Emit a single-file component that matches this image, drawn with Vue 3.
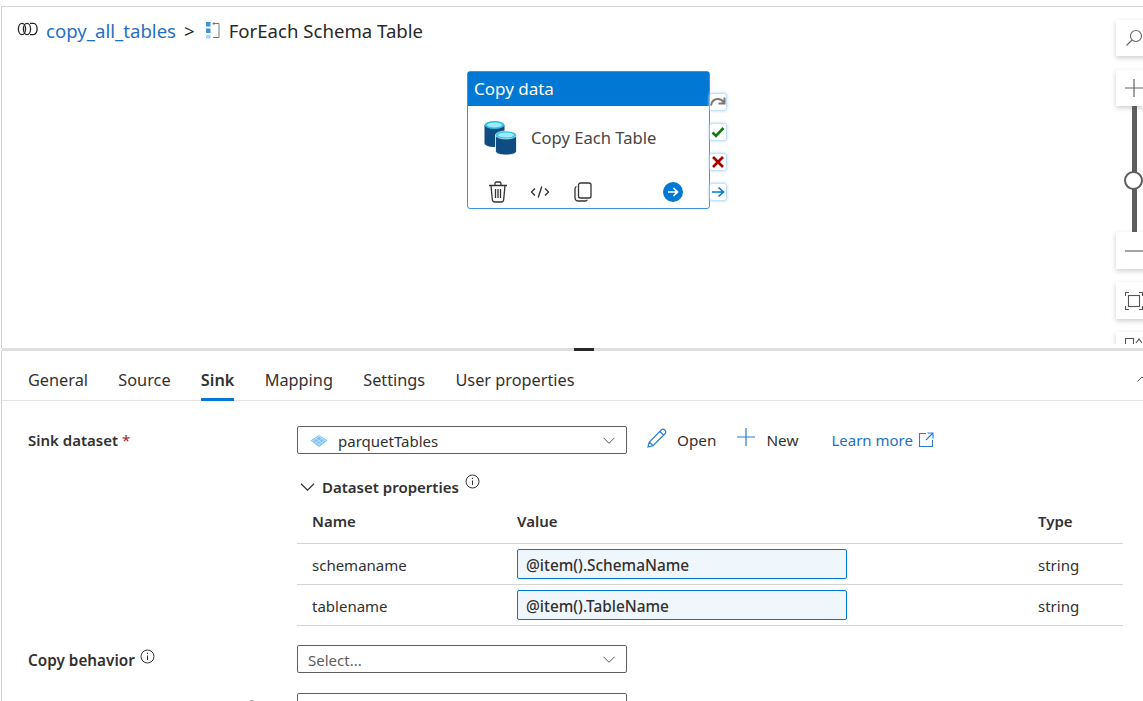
<script setup>
const tabs = ['General', 'Source', 'Sink', 'Mapping', 'Settings', 'User properties']
const params = [
  { name: 'schemaname', value: '@item().SchemaName' },
  { name: 'tablename', value: '@item().TableName' },
]
</script>

<template>
  <div class="page">
    <section class="canvas">
      <nav class="crumbs">
        <svg class="crumb-pipe" width="22" height="16" viewBox="0 0 22 16" fill="none" stroke="#222" stroke-width="1.3">
          <ellipse cx="5" cy="8" rx="3.6" ry="5.6" />
          <ellipse cx="10" cy="8" rx="3.6" ry="5.6" />
          <path d="M13 2.4h3.5a3.6 5.6 0 0 1 0 11.2H13" />
        </svg>
        <a class="crumb-link">copy_all_tables</a>
        <span class="crumb-sep">&gt;</span>
        <svg class="crumb-loop" width="16" height="18" viewBox="0 0 16 18" fill="none">
          <rect x="1" y="1" width="4.5" height="4.5" fill="#3a96dd" />
          <rect x="1" y="7.5" width="4.5" height="4.5" fill="#3a96dd" />
          <rect x="1" y="14" width="4.5" height="3.5" fill="#a9d3f2" />
          <path d="M8 2.5h6v14H8M9.5 1 8 2.5 9.5 4" stroke="#777" stroke-width="1" />
        </svg>
        <span class="crumb-current">ForEach Schema Table</span>
      </nav>

      <article class="node">
        <header class="node-head">Copy data</header>
        <div class="node-body">
          <svg width="34" height="36" viewBox="0 0 34 36">
            <path d="M.5 6v18c0 2.600 5 4 10 4s10-1.400 10-4V6z" fill="#0f4c81" />
            <ellipse cx="10.500" cy="6" rx="10" ry="4" fill="#32bedd" />
            <ellipse cx="10.500" cy="6" rx="7.500" ry="2.500" fill="#9cebff" />
            <path d="M11.500 16v16c0 2.600 5 4 10.500 4s10.500-1.400 10.500-4V16z" fill="#0f4c81" stroke="#fff" stroke-width=".8" />
            <ellipse cx="22" cy="16" rx="10.500" ry="4" fill="#32bedd" stroke="#fff" stroke-width=".6" />
            <ellipse cx="22" cy="16" rx="8" ry="2.500" fill="#9cebff" />
          </svg>
          <span class="node-title">Copy Each Table</span>
        </div>
        <footer class="node-foot">
          <svg width="20" height="22" viewBox="0 0 20 22" fill="none" stroke="#333" stroke-width="1.300">
            <path d="M1 4.500h18M7 4.500V2.500q0-1.500 1.500-1.500h3q1.500 0 1.500 1.500v2M3 4.500l1.300 14q.2 2.500 2.500 2.500h6.400q2.300 0 2.500-2.500l1.300-14M7.500 8v9M10 8v9M12.500 8v9" />
          </svg>
          <svg width="20" height="14" viewBox="0 0 20 14" fill="none" stroke="#333" stroke-width="1.400">
            <path d="M5 3.500 1.500 7 5 10.500M15 3.500 18.500 7 15 10.500M11.800 1.500 8.200 12.500" />
          </svg>
          <svg class="foot-copy" width="18" height="20" viewBox="0 0 18 20" fill="none" stroke="#333" stroke-width="1.300">
            <rect x="4.500" y="1" width="12.500" height="15" rx="2" />
            <path d="M2.500 4.500Q1 5 1 7v8.500Q1 19 4.500 19H11q1.800 0 2.300-1.300" />
          </svg>
          <span class="foot-spacer"></span>
          <svg width="20" height="20" viewBox="0 0 20 20" fill="none">
            <circle cx="10" cy="10" r="10" fill="#0078d4" />
            <path d="M5 10h9.500M10.500 6l4 4-4 4" stroke="#fff" stroke-width="1.700" />
          </svg>
        </footer>
        <div class="ports">
          <span class="port">
            <svg width="16" height="12" viewBox="0 0 16 12" fill="none" stroke="#777" stroke-width="2">
              <path d="M1 9.500Q2 3 8 3q3.500 0 6 3.500M14.500 1.500v6h-6" />
            </svg>
          </span>
          <span class="port">
            <svg width="14" height="12" viewBox="0 0 14 12" fill="none" stroke="#107c10" stroke-width="2.600">
              <path d="M1.500 6.500 5 10l7.500-8" />
            </svg>
          </span>
          <span class="port">
            <svg width="12" height="12" viewBox="0 0 12 12" fill="none" stroke="#a80000" stroke-width="2.600">
              <path d="m1 1 10 10M11 1 1 11" />
            </svg>
          </span>
          <span class="port">
            <svg width="14" height="12" viewBox="0 0 14 12" fill="none" stroke="#0078d4" stroke-width="1.600">
              <path d="M1 6h11M7.500 1.500 12.500 6l-5 4.500" />
            </svg>
          </span>
        </div>
      </article>

      <aside class="zoom">
        <div class="zoom-btn search">
          <svg width="18" height="18" viewBox="0 0 18 18" fill="none" stroke="#666" stroke-width="1.100">
            <circle cx="11" cy="7" r="5.500" /><path d="M7 11 1.500 16.500" />
          </svg>
        </div>
        <div class="zoom-btn plus">
          <svg width="18" height="18" viewBox="0 0 18 18" fill="none" stroke="#666" stroke-width="1.200">
            <path d="M0 9h18M9 0v18" />
          </svg>
        </div>
        <div class="slider"><span class="thumb"></span></div>
        <div class="zoom-btn minus">
          <svg width="18" height="4" viewBox="0 0 18 4" fill="none" stroke="#666" stroke-width="1.200">
            <path d="M0 2h18" />
          </svg>
        </div>
        <div class="zoom-btn fit">
          <svg width="18" height="18" viewBox="0 0 18 18" fill="none" stroke="#555" stroke-width="1.100">
            <rect x="3.500" y="3.500" width="11" height="11" />
            <path d="M.5 4V.5H4M14 .5h3.500V4M.5 14v3.500H4M14 17.500h3.500V14" />
          </svg>
        </div>
        <div class="zoom-btn last">
          <svg width="18" height="12" viewBox="0 0 18 12" fill="none" stroke="#555" stroke-width="1.100">
            <rect x=".5" y="2.500" width="8" height="8" /><path d="m11 7 3-4 3 4" />
          </svg>
        </div>
      </aside>
    </section>

    <div class="splitter"><span class="grip"></span></div>

    <section class="panel">
      <div class="tabs">
        <button v-for="tab in tabs" :key="tab" class="tab" :class="{ active: tab === 'Sink' }">{{ tab }}</button>
        <svg class="collapse" width="10" height="6" viewBox="0 0 10 6" fill="none" stroke="#555">
          <path d="M.5 5.500 5 1l4.500 4.500" />
        </svg>
      </div>

      <div class="form">
        <div class="field sink">
          <label class="label">Sink dataset <em class="req">*</em></label>
          <div class="select">
            <svg class="ds-icon" width="18" height="12" viewBox="0 0 18 12">
              <path d="M9 0l8.500 5.500L9 12 .5 5.500z" fill="#7cc0f5" />
              <path d="M5 3 13 8.500M8.500 1 16 6M3 5l7 5M13 3 5 8.500M9.500 1 2 6M15 5l-7 5" stroke="#d6ecfd" stroke-width=".7" />
            </svg>
            <span>parquetTables</span>
            <svg class="chev" width="12" height="7" viewBox="0 0 12 7" fill="none" stroke="#555">
              <path d="m.5.800 5.500 5.500L11.500.8" />
            </svg>
          </div>
          <div class="actions">
            <a class="action open">
              <svg width="22" height="22" viewBox="0 0 22 22" fill="none" stroke="#2b7cd3" stroke-width="1.200">
                <path d="M2 20l1.300-5L15.500 2.800q1.500-1.300 3 0l.7.700q1.300 1.500 0 3L7 18.700zM3.300 15 7 18.700M14 4.500l3.500 3.500" />
              </svg>
              <span>Open</span>
            </a>
            <a class="action new">
              <svg width="20" height="20" viewBox="0 0 20 20" fill="none" stroke="#2b7cd3" stroke-width="1.200">
                <path d="M1 9h18M10 0v18" />
              </svg>
              <span>New</span>
            </a>
            <a class="learn">
              Learn more
              <svg width="16" height="16" viewBox="0 0 16 16" fill="none" stroke="#2b7cd3" stroke-width="1.100">
                <path d="M8 1.500H1.500v13h13V8M9.500 1h5.500v5.500M15 1 8 8" />
              </svg>
            </a>
          </div>
        </div>

        <div class="props">
          <div class="props-head">
            <svg width="15" height="8" viewBox="0 0 15 8" fill="none" stroke="#333" stroke-width="1.200">
              <path d="m1 .8 6.500 6.400L14 .8" />
            </svg>
            <span>Dataset properties</span>
            <svg class="info props-info" width="15" height="15" viewBox="0 0 15 15" fill="none" stroke="#333">
              <circle cx="7.500" cy="7.500" r="6.500" /><path d="M7.500 6.500v4.500M7.500 3.800v1.200" />
            </svg>
          </div>
          <div class="table">
            <div class="row head"><span>Name</span><span>Value</span><span>Type</span></div>
            <div v-for="p in params" :key="p.name" class="row item">
              <span>{{ p.name }}</span>
              <div class="value">{{ p.value }}</div>
              <span>string</span>
            </div>
          </div>
        </div>

        <div class="field behavior">
          <label class="label behavior-label">Copy behavior
            <svg class="info behavior-info" width="15" height="15" viewBox="0 0 15 15" fill="none" stroke="#333">
              <circle cx="7.500" cy="7.500" r="6.500" /><path d="M7.500 6.500v4.500M7.500 3.800v1.200" />
            </svg>
          </label>
          <div class="select placeholder">
            <span>Select...</span>
            <svg class="chev" width="12" height="7" viewBox="0 0 12 7" fill="none" stroke="#555">
              <path d="m.5.800 5.500 5.500L11.500.8" />
            </svg>
          </div>
        </div>

        <div class="field cutoff">
          <label class="label cutoff-label">
            <svg class="info" width="15" height="15" viewBox="0 0 15 15" fill="none" stroke="#333">
              <circle cx="7.500" cy="7.500" r="6.500" />
            </svg>
          </label>
          <div class="select"></div>
        </div>
      </div>
    </section>
  </div>
</template>

<style>
html, body { margin: 0; background: #fff; overflow: hidden; }
</style>

<style scoped>
.page {
  width: 1143px;
  height: 701px;
  overflow: hidden;
  box-sizing: border-box;
  padding-top: 6px;
  background: #fff;
  color: #323130;
  font-family: "Noto Sans", "Open Sans", sans-serif;
  font-size: 15px;
}
.canvas {
  position: relative;
  height: 342px;
  box-sizing: border-box;
  overflow: hidden;
  border-top: 1px solid #d4d4d4;
  border-left: 1px solid #d4d4d4;
  margin-left: 1px;
}
.crumbs {
  display: flex;
  align-items: center;
  height: 24px;
  padding-top: 11px;
  padding-left: 15px;
  font-size: 18.6px;
}
.crumb-pipe { margin-right: 7px; margin-top: -2px; }
.crumb-link { color: #1f6fc5; }
.crumb-sep { margin: 0 10px 0 8px; color: #222; }
.crumb-loop { margin-top: -1px; margin-right: 8px; }
.crumb-current { color: #292827; }

.node {
  position: absolute;
  left: 465px;
  top: 64px;
  width: 243px;
  height: 138px;
  box-sizing: border-box;
  border: 1px solid #3f93d8;
  border-radius: 3px;
  display: flex;
  flex-direction: column;
  background: #fff;
}
.node-head {
  height: 34px;
  padding-left: 6px;
  background: #0078d4;
  color: #fff;
  font-size: 17px;
  line-height: 34px;
}
.node-body {
  display: flex;
  align-items: center;
  gap: 13px;
  height: 62px;
  padding: 0 16px;
}
.node-title { color: #484644; font-size: 16.6px; }
.node-foot {
  display: flex;
  align-items: center;
  flex: 1;
  gap: 22px;
  padding: 8px 26px 0 20px;
}
.foot-copy { margin-left: 2px; }
.foot-spacer { flex: 1; }
.ports {
  position: absolute;
  left: 242px;
  top: 22px;
  display: flex;
  flex-direction: column;
  gap: 14px;
}
.port {
  width: 16px;
  height: 16px;
  display: flex;
  align-items: center;
  justify-content: center;
  background: #fff;
  border-radius: 2px;
  box-shadow: 0 0 3px 1px #a8d1f3;
}

.zoom {
  position: absolute;
  left: 1114px;
  top: 13px;
  width: 40px;
  height: 324px;
  clip-path: inset(-10px -10px 0 -10px);
  display: flex;
  flex-direction: column;
}
.zoom-btn {
  box-sizing: border-box;
  flex: none;
  height: 37px;
  padding-left: 9px;
  display: flex;
  align-items: center;
  background: #fff;
  box-shadow: 0 2px 5px rgba(0, 0, 0, .2);
}
.search { height: 36px; }
.plus { height: 36px; margin-top: 14px; }
.fit { margin-top: 13px; }
.last { margin-top: 13px; align-items: flex-start; padding-top: 4px; }
.slider {
  position: relative;
  flex: none;
  height: 126px;
  margin-left: 16px;
  width: 5px;
  background: #605e5c;
}
.thumb {
  position: absolute;
  left: -8px;
  top: 65px;
  width: 15px;
  height: 15px;
  border: 2px solid #605e5c;
  border-radius: 50%;
  background: #fff;
}

.splitter {
  position: relative;
  height: 3px;
  margin-left: 2px;
  background: #dedede;
}
.grip {
  position: absolute;
  left: 572px;
  top: 0;
  width: 20px;
  height: 3px;
  background: #292827;
}

.panel {
  height: 350px;
  box-sizing: border-box;
  margin-left: 1px;
  border-left: 1px solid #d4d4d4;
}
.tabs {
  position: relative;
  display: flex;
  gap: 30.3px;
  height: 50px;
  box-sizing: border-box;
  padding-left: 26px;
  border-bottom: 1px solid #e3e3e3;
}
.tab {
  height: 50px;
  padding: 10px 0 0;
  border: 0;
  border-bottom: 3px solid transparent;
  background: none;
  color: #323130;
  font: inherit;
  font-size: 16.3px;
}
.tab.active {
  font-weight: 600;
  border-bottom-color: #0078d4;
}
.collapse { position: absolute; left: 1135px; top: 25px; }

.form { padding: 25px 20px 0 26px; }
.field {
  display: grid;
  grid-template-columns: 269px 330px auto;
  align-items: center;
}
.label { font-weight: 600; color: #323130; }
.behavior-label { font-size: 15.3px; padding-top: 2px; }
.behavior-info { position: relative; top: -2px; margin-left: 1px; }
.cutoff-label { display: flex; padding-left: 216px; height: 15px; }
.req { font-style: normal; color: #a4262c; font-weight: 400; }
.select {
  box-sizing: border-box;
  height: 28px;
  display: flex;
  align-items: center;
  padding-left: 12px;
  padding-top: 1px;
  border: 1px solid #605e5c;
  border-radius: 2px;
}
.ds-icon { margin-right: 10px; }
.chev { margin-left: auto; margin-right: 11px; }
.placeholder { padding-left: 10px; color: #605e5c; }
.actions { display: flex; align-items: center; padding-left: 19px; }
.action { display: flex; align-items: center; gap: 9px; color: #323130; font-size: 15.3px; }
.action svg { margin-top: -4px; }
.new { margin-left: 20px; gap: 10px; }
.learn {
  display: flex;
  align-items: center;
  gap: 5px;
  margin-left: 33px;
  color: #1f6fc5;
}
.props { margin-left: 269px; margin-top: 21px; }
.props-head {
  display: flex;
  align-items: center;
  height: 24px;
  padding-left: 3px;
  gap: 7px;
  font-weight: 600;
}
.info { flex: none; }
.props-info { position: relative; top: -6px; margin-left: -1px; }
.table { margin-top: 11px; }
.row {
  display: grid;
  grid-template-columns: 220px 521px 85px;
  align-items: center;
  box-sizing: border-box;
  height: 41px;
  border-bottom: 1px solid #d4d4d4;
}
.row > span:first-child { padding-left: 15px; }
.item > span { padding-top: 2px; }
.row.head { height: 34px; padding-bottom: 12px; font-weight: 600; }
.value {
  box-sizing: border-box;
  width: 330px;
  height: 30px;
  line-height: 28px;
  padding: 2px 0 0 8px;
  border: 1px solid #0078d4;
  border-radius: 2px;
  background: #eff6fc;
  font-size: 15.4px;
  font-weight: 500;
}
.behavior { margin-top: 19px; }
.cutoff { margin-top: 20px; }
</style>
